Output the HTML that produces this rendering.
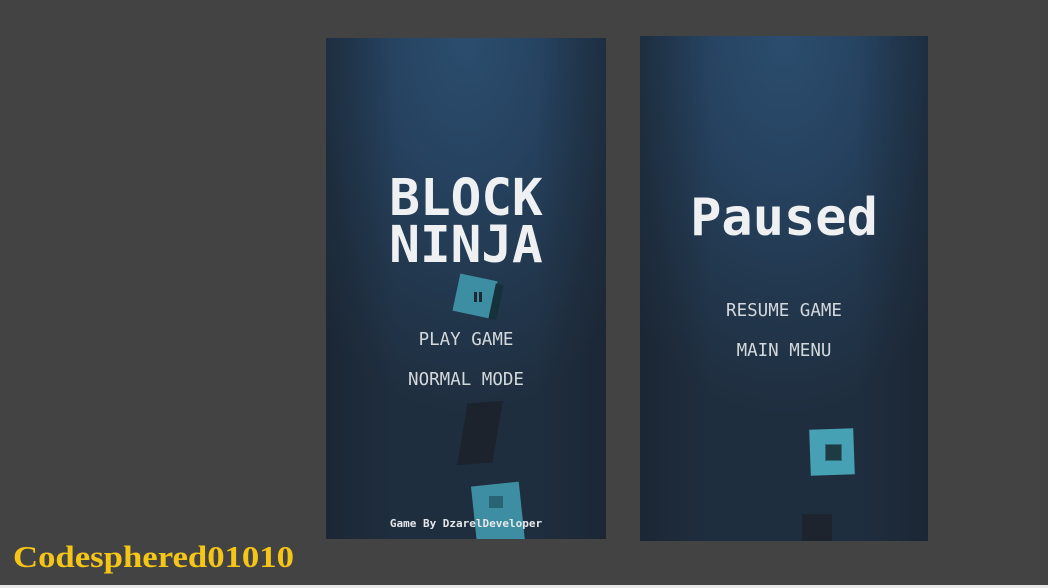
<!DOCTYPE html>
<html><head><style>
body{margin:0;width:1048px;height:588px;background:#434343;position:relative;overflow:hidden;font-family:"DejaVu Sans Mono","Liberation Mono",monospace;}
.p{position:absolute;background:radial-gradient(ellipse 80% 75% at 50% 0%,#2c4d6e 0%,#264361 35%,#22374d 70%,#1f2e3f 100%);overflow:hidden;}
.p:after{content:"";position:absolute;inset:0;background:linear-gradient(90deg,rgba(20,25,32,.35),rgba(0,0,0,0) 25%,rgba(0,0,0,0) 75%,rgba(20,25,32,.35));}
.t{position:absolute;left:0;right:0;text-align:center;color:#eef0f2;white-space:nowrap;z-index:2;}
.m{color:#d3d8dc;font-size:17.5px;}
.b{position:absolute;z-index:1;}
</style></head><body>
<div class="p" style="left:326px;top:38px;width:280px;height:501px;">
 <div class="t" style="top:137px;font-size:51px;line-height:47px;font-weight:bold;">BLOCK<br>NINJA</div>
 <div class="b" style="left:130px;top:239px;width:38px;height:38px;background:#3d8ea2;transform:rotate(12deg);"></div>
 <div class="b" style="left:166px;top:246px;width:8px;height:36px;background:#163139;transform:rotate(12deg);"></div>
 <div class="b" style="left:148px;top:254px;width:3px;height:10px;background:#1a2b33;"></div>
 <div class="b" style="left:153px;top:254px;width:3px;height:10px;background:#1a2b33;"></div>
 <div class="t m" style="top:292px;">PLAY GAME</div>
 <div class="t m" style="top:332px;">NORMAL MODE</div>
 <div class="b" style="left:136px;top:365px;width:36px;height:60px;background:#1c232d;transform:skewY(-14deg) rotate(10deg);"></div>
 <div class="b" style="left:148px;top:446px;width:48px;height:60px;background:#3d8ea2;transform:rotate(-6deg);"></div>
 <div class="b" style="left:163px;top:458px;width:14px;height:12px;background:#2a6474;"></div>
 <div class="t" style="top:479px;font-size:11px;font-weight:bold;color:#e6e8ea;">Game By DzarelDeveloper</div>
</div>
<div class="p" style="left:640px;top:36px;width:288px;height:505px;">
 <div class="t" style="top:152px;font-size:52px;line-height:60px;font-weight:bold;">Paused</div>
 <div class="t m" style="top:265px;">RESUME GAME</div>
 <div class="t m" style="top:305px;">MAIN MENU</div>
 <div class="b" style="left:170px;top:393px;width:44px;height:46px;background:#46a1b5;transform:rotate(-2deg);"></div>
 <div class="b" style="left:185px;top:408px;width:15px;height:15px;background:#1e3b45;border:1px solid #2f6a78;"></div>
 <div class="b" style="left:162px;top:478px;width:30px;height:30px;background:#1d242d;"></div>
</div>
<div style="position:absolute;left:13px;top:539px;font-family:'Liberation Serif',serif;font-weight:bold;font-size:31px;color:#f5c518;transform:scaleX(1.12);transform-origin:left;">Codesphered01010</div>
<div style="position:absolute;left:0;top:585px;width:1048px;height:3px;background:#e8e8e8;"></div>
</body></html>
